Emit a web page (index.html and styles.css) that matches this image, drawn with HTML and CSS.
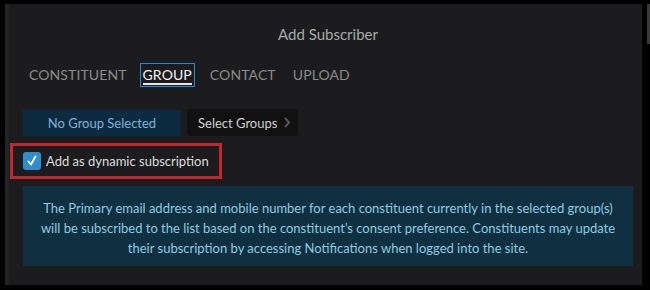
FILE: index.html
```html
<!DOCTYPE html>
<html>
<head>
<meta charset="utf-8">
<link rel="stylesheet" href="styles.css">
</head>
<body>
<div class="frame">
  <div class="panel">
    <h1 class="title">Add Subscriber</h1>
    <nav class="tabs">
      <span class="tab">CONSTITUENT</span>
      <span class="tab active">GROUP</span>
      <span class="tab">CONTACT</span>
      <span class="tab">UPLOAD</span>
    </nav>
    <div class="group-row">
      <div class="group-value">No Group Selected</div>
      <button class="select-btn">Select Groups <svg class="chev" width="6" height="11" viewBox="0 0 6 11"><path d="M1 1 L5 5.5 L1 10" fill="none" stroke="#555" stroke-width="2"/></svg></button>
    </div>
    <div class="highlight">
      <label class="check">
        <span class="box"><svg width="12" height="12" viewBox="0 0 12 12"><path d="M2.5 6.5 L5 9.5 L9.5 1.5" fill="none" stroke="#fff" stroke-width="1.8" stroke-linecap="round" stroke-linejoin="round"/></svg></span>
        <span class="check-label">Add as dynamic subscription</span>
      </label>
    </div>
    <div class="info">The Primary email address and mobile number for each constituent currently in the selected group(s) will be subscribed to the list based on the constituent’s consent preference. Constituents may update their subscription by accessing Notifications when logged into the site.</div>
  </div>
  <div class="scroll"></div>
</div>
</body>
</html>
```
FILE: styles.css
```css
html, body {
  margin: 0;
  padding: 0;
  background: #000;
  width: 650px;
  height: 290px;
  overflow: hidden;
  font-family: Lato, "Open Sans", sans-serif;
}
.frame {
  display: flex;
  padding: 4px 0 0 5px;
  height: 290px;
  box-sizing: border-box;
}
.panel {
  width: 637px;
  height: 281px;
  box-sizing: border-box;
  background: #1c1c1e;
  border-left: 4px solid #232325;
  padding: 20px 9px 0 14px;
  display: flex;
  flex-direction: column;
}
.scroll {
  width: 3px;
  height: 40px;
  margin-left: 5px;
  background: #3a3a3a;
}
.title {
  margin: 0 0 20px 0;
  font-size: 15px;
  font-weight: 400;
  line-height: 20px;
  text-align: center;
  color: #a9a9a9;
}
.tabs {
  display: flex;
  gap: 13px;
  margin-left: 4px;
  height: 24px;
  margin-top: -1px;
}
.tab {
  font-size: 14px;
  line-height: 20px;
  color: #8b8b8b;
  padding: 2px 2px;
  letter-spacing: 0.1px;
}
.tab.active {
  color: #f2f2f2;
  position: relative;
  padding: 1px 2px 3px;
  margin-left: -2px;
  border: 1px solid #2a8ad0;
}
.tab.active::after {
  content: "";
  position: absolute;
  left: 2px;
  right: 2px;
  bottom: 1px;
  height: 2px;
  background: #e8e8e8;
}
.group-row {
  display: flex;
  gap: 6px;
  margin-top: 22px;
  align-items: flex-start;
}
.group-value {
  width: 158px;
  height: 26px;
  margin-top: 1px;
  background: #0c2a40;
  color: #7fb2d6;
  font-size: 13px;
  line-height: 26px;
  text-align: center;
}
.select-btn {
  height: 27px;
  width: 111px;
  border: none;
  border-radius: 4px;
  background: #111112;
  color: #cfcfcf;
  font-family: Lato, sans-serif;
  font-size: 13px;
  padding: 0 0 0 11px;
  text-align: left;
  display: flex;
  align-items: center;
  gap: 7px;
}
.chev {
  display: block;
}
.highlight {
  margin: 7px 0 0 -13px;
  width: 212px;
  height: 36px;
  box-sizing: border-box;
  border: 3px solid #c1272d;
  display: flex;
  align-items: center;
  padding-left: 10px;
}
.check {
  display: flex;
  align-items: center;
  gap: 5px;
}
.box {
  width: 18px;
  height: 18px;
  border-radius: 3px;
  background: #2f8fcc;
  display: flex;
  align-items: center;
  justify-content: center;
}
.check-label {
  color: #dcdcdc;
  font-size: 13px;
}
.info {
  margin-top: 7px;
  background: #0f3040;
  color: #8ecbe2;
  font-size: 13px;
  line-height: 20px;
  text-align: center;
  padding: 12px 14px 0;
  height: 80px;
  box-sizing: border-box;
}
```
